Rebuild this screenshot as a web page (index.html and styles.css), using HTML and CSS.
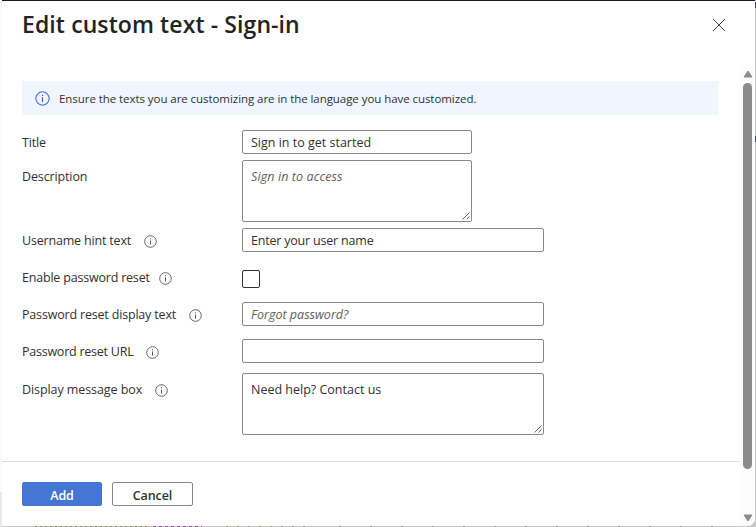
FILE: index.html
```html
<!DOCTYPE html>
<html lang="en">
<head>
<meta charset="utf-8">
<title>Edit custom text - Sign-in</title>
<link rel="stylesheet" href="styles.css">
</head>
<body>
<svg class="defs" width="0" height="0">
  <symbol id="info" viewBox="0 0 13 13"><circle cx="6.5" cy="6.5" r="5.8" fill="none" stroke="currentColor" stroke-width=".9"/><path d="M6.5 5.5v4M6.5 3.3v1.1" fill="none" stroke="currentColor"/></symbol>
  <symbol id="grip" viewBox="0 0 8 8"><path d="M.5 7.5l7-7M4.5 7.5l3-3" fill="none" stroke="#555" stroke-width=".9"/></symbol>
</svg>
<div class="page">
  <section class="panel">
    <header class="header">
      <h1><span>Edit custom text - Sign-in</span></h1>
      <svg class="close" viewBox="0 0 14 14"><path d="M1 1l12 12M13 1L1 13" fill="none" stroke="#444" stroke-width="1"/></svg>
    </header>
    <div class="main">
      <div class="content">
        <div class="notice">
          <svg class="notice-icon"><use href="#info"/></svg>
          <span>Ensure the texts you are customizing are in the language you have customized.</span>
        </div>
        <div class="form">
          <div class="row title-row"><div class="label"><span>Title</span></div><div class="field short"><span>Sign in to get started</span></div></div>
          <div class="row area-row"><div class="label"><span class="l-desc">Description</span></div><div class="field short area hint"><span class="v-access">Sign in to access</span><svg class="grip"><use href="#grip"/></svg></div></div>
          <div class="row user-row"><div class="label"><span>Username hint text</span><svg class="info"><use href="#info"/></svg></div><div class="field"><span class="v-user">Enter your user name</span></div></div>
          <div class="row check-row"><div class="label tight"><span class="l-enable">Enable password reset</span><svg class="info"><use href="#info"/></svg></div><div class="check"></div></div>
          <div class="row display-row"><div class="label"><span>Password reset display text</span><svg class="info"><use href="#info"/></svg></div><div class="field hint"><span>Forgot password?</span></div></div>
          <div class="row url-row"><div class="label"><span class="l-url">Password reset URL</span><svg class="info"><use href="#info"/></svg></div><div class="field"></div></div>
          <div class="row area-row"><div class="label"><span class="l-message">Display message box</span><svg class="info"><use href="#info"/></svg></div><div class="field area"><span>Need help? Contact us</span><svg class="grip"><use href="#grip"/></svg></div></div>
        </div>
        <footer class="footer"><div class="button primary">Add</div><div class="button">Cancel</div></footer>
      </div>
      <div class="scrollbar">
        <svg class="arrow" viewBox="0 0 10 8"><path d="M5 1L9 7H1z" fill="#8b8b8b" stroke="#8b8b8b" stroke-linejoin="round"/></svg>
        <div class="thumb"></div>
        <svg class="arrow down" viewBox="0 0 10 8"><path d="M5 7L9 1H1z" fill="#8b8b8b" stroke="#8b8b8b" stroke-linejoin="round"/></svg>
      </div>
    </div>
  </section>
</div>
</body>
</html>
```
FILE: styles.css
```css
* { box-sizing: border-box; }
body { margin: 0; width: 756px; height: 527px; overflow: hidden; background: #c8c8c8; font-family: "Open Sans", "Noto Sans", sans-serif; font-size: 12.5px; color: #323130; }
.defs { position: absolute; }
svg { display: block; flex: none; }
.page {
  width: 756px; height: 527px; padding-left: 2px;
  background:
    linear-gradient(#fafafa 492px, #e8e8e8 492px) left / 2px 100% no-repeat,
    linear-gradient(#4b3a7c, #4b3a7c) right 2px / 1px 6px no-repeat,
    linear-gradient(#4b4a6c, #4b4a6c) right 136px / 1px 6px no-repeat,
    repeating-linear-gradient(90deg, #7d8c52 0 2px, #c8c8c8 2px 5px) 35px 526px / 112px 1px no-repeat,
    repeating-linear-gradient(90deg, #a047ad 0 3px, #c8c8c8 3px 6px) 153px 526px / 49px 1px no-repeat,
    repeating-linear-gradient(90deg, #97976f 0 2px, #c8c8c8 2px 11px) 226px 526px / 80px 1px no-repeat,
    repeating-linear-gradient(90deg, #8095a3 0 2px, #c8c8c8 2px 31px) 339px 526px / 400px 1px no-repeat,
    #c8c8c8;
}
.panel { width: 753px; height: 526px; background: #fff; border-top: 1px solid #1b1a19; border-bottom-right-radius: 8px; overflow: hidden; }
.header { height: 64px; padding: 7px 29px 0 20px; display: flex; justify-content: space-between; align-items: flex-start; }
h1 { margin: 0; font-size: 23px; line-height: 32px; font-weight: 600; color: #242322; white-space: nowrap; letter-spacing: .1px; }
.close { width: 14px; height: 14px; margin-top: 10px; }
.main { display: flex; height: 461px; }
.content { width: 738px; padding-top: 16px; }
.notice { margin-left: 20px; width: 696px; height: 34px; background: #f0f6ff; display: flex; align-items: center; padding-left: 13px; gap: 9px; font-size: 11.5px; letter-spacing: -.06px; white-space: nowrap; }
.notice span { padding-top: 1px; }
.notice-icon { width: 15px; height: 15px; color: #4262d8; }
.form { padding: 15px 20px 0; height: 346px; }
.row { display: grid; grid-template-columns: 220px 1fr; line-height: 24px; white-space: nowrap; }
.title-row { height: 30px; }
.area-row { height: 68px; }
.user-row { height: 38px; }
.check-row { height: 36px; }
.display-row { height: 37px; }
.url-row { height: 34px; }
.label { display: flex; gap: 13px; height: 24px; align-items: center; letter-spacing: -.18px; }
.label span { padding-top: 1px; }
.label.tight { gap: 9px; }
.label.tight span { padding-top: 0; }
.l-desc { letter-spacing: -.13px; }
.l-enable { letter-spacing: -.2px; }
.l-url { letter-spacing: -.24px; }
.l-message { letter-spacing: -.08px; }
.v-user { letter-spacing: -.2px; }
.v-access { letter-spacing: .1px; }
.area-row .label { margin-top: 4px; }
.info { width: 13px; height: 13px; margin-top: 2px; color: #555; }
.tight .info { margin-top: 1px; }
.field { width: 302px; height: 24px; border: 1px solid #8a8886; border-radius: 2px; padding-left: 8px; line-height: 23px; }
.field.short { width: 230px; }
.field.area { height: 62px; padding-top: 4px; position: relative; }
.field.hint { font-style: italic; color: #605e5c; }
.grip { position: absolute; right: 1px; bottom: 1px; width: 8px; height: 8px; }
.check { width: 18px; height: 18px; margin-top: 4px; border: 1px solid #323130; border-radius: 2px; }
.footer { border-top: 1px solid #dcdcdc; display: flex; gap: 10px; padding: 20px 0 0 20px; }
.button { width: 81px; height: 24px; border: 1px solid #8a8886; border-radius: 2px; display: flex; align-items: center; justify-content: center; font-weight: 600; font-size: 12.5px; letter-spacing: -.1px; color: #323130; padding-top: 2px; }
.button.primary { width: 80px; background: #4676d4; border-color: #4676d4; color: #fff; }
.scrollbar { width: 15px; height: 461px; background: #fcfcfc; display: flex; flex-direction: column; align-items: center; padding-top: 5px; }
.arrow { width: 10px; height: 8px; }
.thumb { width: 9px; height: 386px; border-radius: 5px; background: #8b8b8b; margin-top: 5px; }
.down { margin-top: 45px; }
```
